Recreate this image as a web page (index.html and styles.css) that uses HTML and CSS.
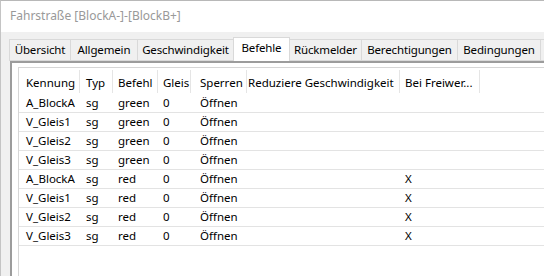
FILE: index.html
```html
<!DOCTYPE html>
<html lang="de">
<head>
    <meta charset="UTF-8" />
    <title>Fahrstraße</title>
    <link rel="stylesheet" href="styles.css">
</head>
<body>

<div class="window">
    <div class="titlebar">Fahrstraße [BlockA-]-[BlockB+]</div>

    <div class="client">
        <div class="tabs">
            <div class="tab w-uebersicht">Übersicht</div>
            <div class="tab w-allgemein">Allgemein</div>
            <div class="tab w-geschw">Geschwindigkeit</div>
            <div class="tab active w-befehle">Befehle</div>
            <div class="tab w-rueck">Rückmelder</div>
            <div class="tab w-berecht">Berechtigungen</div>
            <div class="tab w-beding">Bedingungen</div>
            <div class="tab w-rest"></div>
        </div>

        <div class="panel">
            <div class="listview">
                <table>
                    <colgroup>
                        <col class="c-kennung">
                        <col class="c-typ">
                        <col class="c-befehl">
                        <col class="c-gleis">
                        <col class="c-sperren">
                        <col class="c-reduz">
                        <col class="c-frei">
                        <col>
                    </colgroup>
                    <thead>
                    <tr>
                        <th class="p7">Kennung</th>
                        <th class="p6">Typ</th>
                        <th class="p5">Befehl</th>
                        <th class="p5">Gleis</th>
                        <th class="p9">Sperren</th>
                        <th class="p1">Reduziere Geschwindigkeit</th>
                        <th class="p5">Bei Freiwer...</th>
                        <th class="last"></th>
                    </tr>
                    </thead>
                    <tbody id="rows"></tbody>
                </table>
            </div>
        </div>
    </div>
</div>

<script>
    const befehle = [
        { kennung: 'A_BlockA', typ: 'sg', befehl: 'green', gleis: 0, sperren: 'Öffnen', frei: '' },
        { kennung: 'V_Gleis1', typ: 'sg', befehl: 'green', gleis: 0, sperren: 'Öffnen', frei: '' },
        { kennung: 'V_Gleis2', typ: 'sg', befehl: 'green', gleis: 0, sperren: 'Öffnen', frei: '' },
        { kennung: 'V_Gleis3', typ: 'sg', befehl: 'green', gleis: 0, sperren: 'Öffnen', frei: '' },
        { kennung: 'A_BlockA', typ: 'sg', befehl: 'red', gleis: 0, sperren: 'Öffnen', frei: 'X' },
        { kennung: 'V_Gleis1', typ: 'sg', befehl: 'red', gleis: 0, sperren: 'Öffnen', frei: 'X' },
        { kennung: 'V_Gleis2', typ: 'sg', befehl: 'red', gleis: 0, sperren: 'Öffnen', frei: 'X' },
        { kennung: 'V_Gleis3', typ: 'sg', befehl: 'red', gleis: 0, sperren: 'Öffnen', frei: 'X' }
    ];

    const tbody = document.getElementById('rows');
    befehle.forEach(b => {
        tbody.innerHTML += `
          <tr>
            <td class="p7">${b.kennung}</td>
            <td class="p6">${b.typ}</td>
            <td class="p5">${b.befehl}</td>
            <td class="p5">${b.gleis}</td>
            <td class="p9">${b.sperren}</td>
            <td class="p1"></td>
            <td class="p5">${b.frei}</td>
            <td></td>
          </tr>
        `;
    });
</script>

</body>
</html>
```

FILE: styles.css
```css
html, body {
    margin: 0;
    padding: 0;
}

body {
    width: 544px;
    height: 276px;
    overflow: hidden;
    font-family: "Noto Sans", "Open Sans", sans-serif;
    font-size: 11.5px;
    color: #000;
    background: #f0f0f0;
}

.window {
    height: 276px;
    border-left: 1px solid #c4c4c4;
    border-top: 1px solid #b8b8b8;
    box-sizing: border-box;
    overflow: hidden;
}

.titlebar {
    height: 31px;
    line-height: 30px;
    padding-left: 9px;
    background: #fff;
    color: #999;
    font-size: 12px;
}

/* tabs */
.tabs {
    display: flex;
    align-items: flex-end;
    height: 24px;
    padding-top: 5px;
    padding-left: 8px;
    overflow: hidden;
}

.tab {
    flex: none;
    box-sizing: border-box;
    height: 22px;
    line-height: 20px;
    margin-left: -1px;
    text-align: center;
    white-space: nowrap;
    letter-spacing: -0.15px;
    background: #f0f0f0;
    border: 1px solid #d9d9d9;
}

.tab:first-child {
    margin-left: 0;
}

.tab.active {
    position: relative;
    height: 24px;
    background: #fff;
    border-bottom: none;
}

.w-uebersicht { width: 62px; }
.w-allgemein { width: 68px; }
.w-geschw { width: 97px; }
.w-befehle { width: 57px; }
.w-rueck { width: 73px; }
.w-berecht { width: 97px; }
.w-beding { width: 84px; }
.w-rest { width: 5px; border-right: none; }

/* panel with the list */
.panel {
    margin-left: 9px;
    height: 215px;
    box-sizing: border-box;
    border-left: 2px solid #9c9c9c;
    border-top: 2px solid #9c9c9c;
    background: #fff;
    padding: 4px 0 0 6px;
}

.listview {
    height: 100%;
    box-sizing: border-box;
    border-left: 1px solid #d6d6d6;
    border-top: 1px solid #d6d6d6;
    background: #fff;
    overflow: hidden;
}

table {
    border-collapse: collapse;
    table-layout: fixed;
    width: 100%;
}

.c-kennung { width: 61px; }
.c-typ { width: 33px; }
.c-befehl { width: 45px; }
.c-gleis { width: 33px; }
.c-sperren { width: 56px; }
.c-reduz { width: 153px; }
.c-frei { width: 80px; }

th, td {
    padding: 0;
    text-align: left;
    white-space: nowrap;
    overflow: hidden;
}

th {
    height: 26px;
    padding-top: 2px;
    box-sizing: border-box;
    font-weight: normal;
    background: linear-gradient(#e5e5e5, #e5e5e5) right 2px / 1px 23px no-repeat;
}

th.last {
    background: none;
}

td {
    height: 18px;
    line-height: 18px;
    border-bottom: 1px solid #e3e3e3;
}

.p1 { padding-left: 1px; }
.p5 { padding-left: 5px; }
.p6 { padding-left: 6px; }
.p7 { padding-left: 7px; }
.p9 { padding-left: 9px; }
```
